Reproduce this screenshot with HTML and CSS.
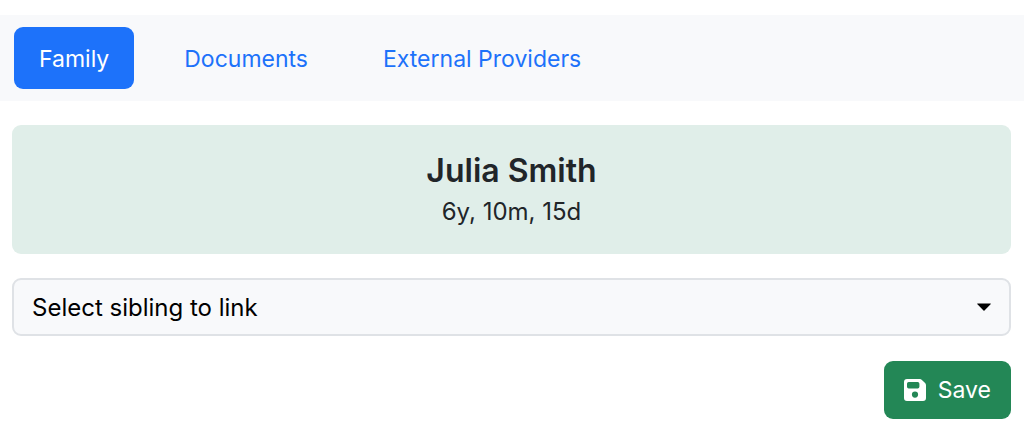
FILE: index.html
```html
<!DOCTYPE html>
<html lang="en">
<head>
    <meta charset="UTF-8">
    <meta name="viewport" content="width=device-width, initial-scale=1.0">
    <title>Family</title>
    <link rel="stylesheet" href="styles.css">
</head>
<body>
    <nav class="tabs">
        <a class="tab active" href="#family" aria-current="page">Family</a>
        <a class="tab" href="#documents">Documents</a>
        <a class="tab" href="#providers">External Providers</a>
    </nav>

    <main class="container">
        <section class="patient">
            <h1>Julia Smith</h1>
            <p>6y, 10m, 15d</p>
        </section>

        <form class="sibling-form">
            <div class="select-wrap">
                <select id="sibling" name="sibling" aria-label="Select sibling to link">
                    <option>Select sibling to link</option>
                </select>
                <svg class="caret" viewBox="0 0 14 8" aria-hidden="true">
                    <path d="M0.600 0.500h12.800q0.800 0 0.200 0.700L7.500 7.600q-0.500 0.400-1 0L0.400 1.200q-0.600-0.700 0.200-0.700z"/>
                </svg>
            </div>

            <button type="submit" class="save">
                <svg class="icon" viewBox="0 0 22 22" aria-hidden="true">
                    <path fill-rule="evenodd" d="M3 0h12.700a3 3 0 0 1 2.200 0.900l3.200 3.200a3 3 0 0 1 0.900 2.200V19a3 3 0 0 1-3 3H3a3 3 0 0 1-3-3V3a3 3 0 0 1 3-3zM4.700 3A1.700 1.700 0 0 0 3 4.700v3A1.700 1.700 0 0 0 4.700 9.400h9a1.700 1.700 0 0 0 1.700-1.700v-3A1.700 1.700 0 0 0 13.700 3zM11 12.500a3.100 3.100 0 1 0 0 6.200 3.100 3.100 0 0 0 0-6.200z"/>
                </svg>
                Save
            </button>
        </form>
    </main>
</body>
</html>
```
FILE: styles.css
```css
* {
    box-sizing: border-box;
}

body {
    font-family: Inter, "Liberation Sans", sans-serif;
    font-size: 24px;
    line-height: 36px;
    color: #212529;
    background-color: #fff;
    margin: 0;
    padding-top: 15px;
}

.tabs {
    display: flex;
    flex-wrap: wrap;
    gap: 25px;
    padding: 12px 14px;
    background-color: #f8f9fb;
}

.tab {
    padding: 14px 25px 12px;
    border-radius: 9px;
    color: #1d72fa;
    font-size: 23px;
    text-decoration: none;
}

.tab.active {
    background-color: #1d72fa;
    color: #fff;
}

.container {
    padding: 24px 13px 14px 12px;
}

.patient {
    padding: 27px 24px 24px;
    border-radius: 9px;
    background-color: #e0eee9;
    text-align: center;
}

.patient h1 {
    margin: 0 0 4px;
    font-size: 32px;
    line-height: 38px;
    font-weight: 600;
}

.patient p {
    margin: 0;
}

.sibling-form {
    display: flex;
    flex-direction: column;
    gap: 25px;
    margin-top: 24px;
}

.select-wrap {
    position: relative;
}

select {
    display: block;
    width: 100%;
    height: 58px;
    padding: 2px 48px 0 18px;
    border: 2px solid #dfe2e6;
    border-radius: 9px;
    background-color: #f8f9fb;
    color: #000;
    font: inherit;
    appearance: none;
}

.caret {
    position: absolute;
    top: 25px;
    right: 20px;
    width: 14px;
    height: 8px;
    pointer-events: none;
}

.save {
    display: flex;
    align-items: center;
    align-self: flex-end;
    gap: 12px;
    padding: 11px 20px;
    border: none;
    border-radius: 9px;
    background-color: #238756;
    color: #fff;
    font: inherit;
    font-size: 23px;
    cursor: pointer;
}

.save:hover {
    background-color: #1c6f46;
}

.icon {
    width: 22px;
    height: 22px;
    fill: currentColor;
}
```
